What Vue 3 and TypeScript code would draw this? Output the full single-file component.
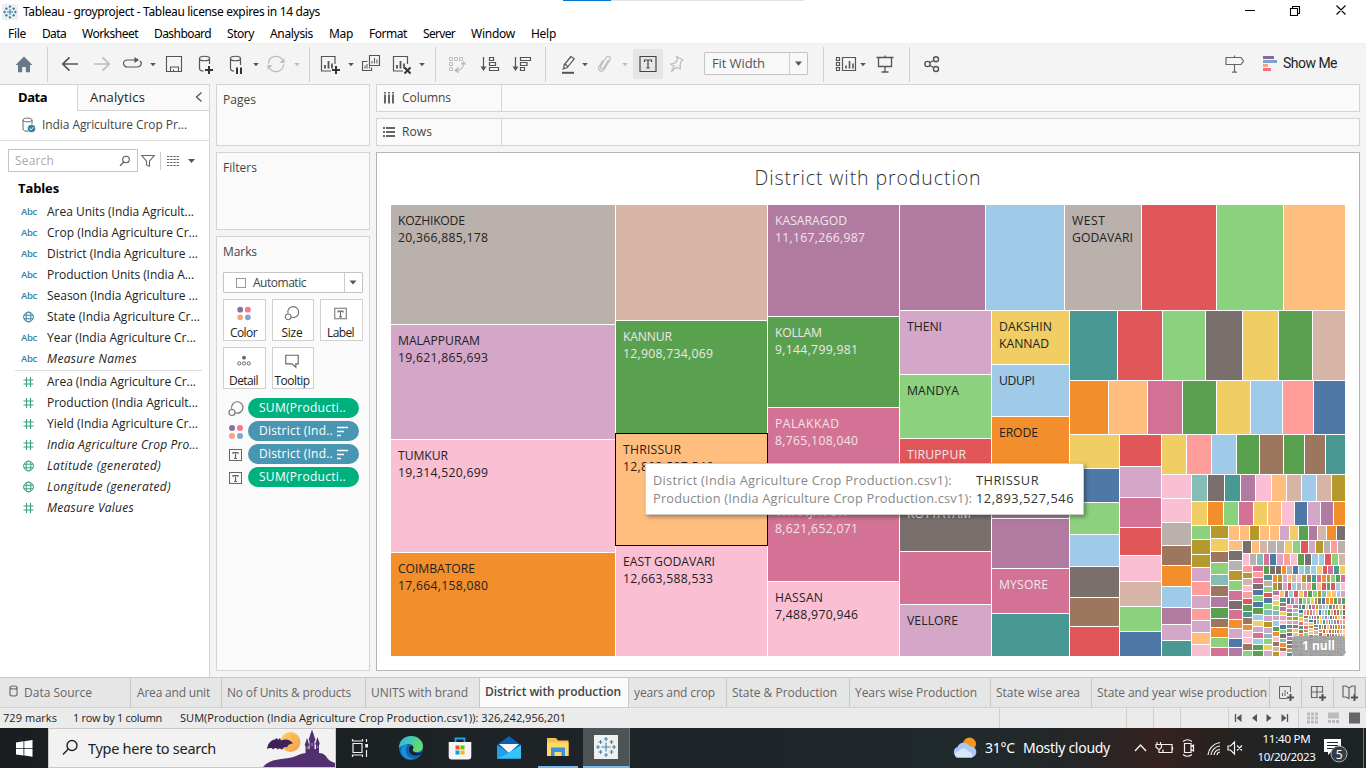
<script setup lang="ts">
type Strip = { dir: 'r' | 'c'; a: number; b: number; edges: number[]; cols: string }
type Rect = { x: number; y: number; w: number; h: number; fill: string }
type Label = { x: number; y: number; w: number; t: string; light?: boolean }

// Sets tracking so that a label fills its designed width.
const vFit = {
  mounted(el: HTMLElement, b: { value: number }) {
    const n = (el.textContent || '').trim().length
    const w = el.getBoundingClientRect().width
    if (n > 0) el.style.letterSpacing = ((b.value - w) / n).toFixed(3) + 'px'
  },
}

const palette: Record<string, string> = {
  b: '#4e79a7', l: '#a0cbe8', o: '#f28e2b', p: '#ffbe7d', g: '#59a14f', h: '#8cd17d', m: '#b6992d',
  y: '#f1ce63', t: '#499894', u: '#86bcb6', r: '#e15759', s: '#ff9d9a', k: '#79706e', a: '#bab0ac',
  d: '#d37295', f: '#fabfd2', v: '#b07aa1', w: '#d4a6c8', n: '#9d7660', c: '#d7b5a6',
}

const span = (from: number, to: number, n: number): number[] =>
  Array.from({ length: n + 1 }, (_, i) => Math.round(from + ((to - from) * i) / n))
const even = (dir: 'r' | 'c', a: number, b: number, from: number, to: number, cols: string): Strip =>
  ({ dir, a, b, edges: span(from, to, cols.length), cols })

const strips: Strip[] = [
  { dir: 'c', a: 391, b: 616, edges: [205, 325, 440, 553, 657], cols: 'awfo' },
  { dir: 'c', a: 616, b: 768, edges: [205, 321, 434, 546, 657], cols: 'cgpf' },
  { dir: 'c', a: 768, b: 900, edges: [205, 317, 408, 495, 582, 657], cols: 'vgddf' },
  { dir: 'r', a: 205, b: 311, edges: [900, 986, 1065, 1142, 1217, 1284, 1346], cols: 'vlarhp' },
  { dir: 'c', a: 900, b: 992, edges: [311, 375, 439, 497, 552, 605, 657], cols: 'whrkdw' },
  { dir: 'c', a: 992, b: 1070, edges: [311, 365, 417, 468, 519, 569, 614, 657], cols: 'ylovvdt' },
  { dir: 'r', a: 311, b: 381, edges: [1070, 1118, 1163, 1206, 1243, 1279, 1313, 1346], cols: 'trhkygc' },
  { dir: 'r', a: 381, b: 435, edges: [1070, 1109, 1148, 1183, 1217, 1251, 1283, 1314, 1346], cols: 'opdgylsb' },
  { dir: 'c', a: 1070, b: 1120, edges: [435, 469, 503, 535, 567, 598, 627, 657], cols: 'ybhlknr' },
  { dir: 'c', a: 1120, b: 1162, edges: [435, 467, 498, 528, 556, 582, 607, 632, 657], cols: 'rwdrfchb' },
  { dir: 'r', a: 435, b: 475, edges: [1162, 1187, 1212, 1237, 1260, 1284, 1305, 1326, 1346], cols: 'yslgngnt' },
  { dir: 'c', a: 1162, b: 1192, edges: [475, 499, 523, 546, 566, 587, 608, 625, 641, 657], cols: 'ffanolvwt' },
  { dir: 'r', a: 475, b: 502, edges: [1192, 1208, 1225, 1241, 1256, 1272, 1287, 1302, 1317, 1332, 1346], cols: 'uktvfpclcm' },
  { dir: 'r', a: 502, b: 526, edges: [1192, 1208, 1224, 1239, 1254, 1268, 1282, 1295, 1308, 1321, 1334, 1346], cols: 'yohdypfbwvo' },
  { dir: 'c', a: 1192, b: 1211, edges: [526, 540, 555, 568, 582, 596, 609, 621, 633, 645, 657], cols: 'hmmwswswpf' },
  { dir: 'c', a: 1211, b: 1229, edges: [526, 539, 552, 563, 575, 586, 597, 608, 619, 628, 638, 648, 657], cols: 'mynhunvgnohd' },
  { dir: 'r', a: 526, b: 541, edges: [1229, 1240, 1250, 1260, 1270, 1280, 1290, 1299, 1309, 1318, 1327, 1337, 1346], cols: 'ppmppwygvcok' },
  { dir: 'c', a: 1229, b: 1243, edges: [541, 551, 561, 571, 581, 591, 601, 610, 620, 629, 639, 648, 657], cols: 'pkamhdkdowbv' },
  { dir: 'r', a: 541, b: 554, edges: [1243, 1252, 1260, 1268, 1277, 1285, 1293, 1301, 1309, 1316, 1324, 1331, 1338, 1346], cols: 'kpcaayhrwmasa' },
  even('r', 554, 566, 1243, 1346, 'faudbwsfgkllrhc'),
  even('c', 1243, 1253, 566, 657, 'smcfsrgtnoffnh'),
  even('c', 1253, 1264, 566, 657, 'dsdkbhbglywdlgg'),
  even('r', 566, 575, 1264, 1346, 'gkkoablulyrdty'),
  even('c', 1264, 1273, 575, 657, 'tahrbhuwmwuhyw'),
  even('r', 575, 583, 1273, 1346, 'omwpcfmntdomhgd'),
  even('r', 583, 591, 1273, 1346, 'mnwrlacsgprgrlf'),
  even('c', 1273, 1280, 591, 657, 'vfyhuwlgofncm'),
  even('r', 591, 598, 1280, 1346, 'pnlrydghmuyplw'),
  even('c', 1280, 1287, 598, 657, 'tnvywfbhkuonf'),
  even('r', 598, 605, 1287, 1346, 'bvwghhymkboogvg'),
  even('c', 1287, 1293, 605, 657, 'sdgowtmbdknot'),
  even('c', 1293, 1299, 605, 657, 'vwhmanpywubsh'),
  even('r', 605, 610, 1299, 1346, 'gbpkdmualgvoyr'),
  even('c', 1299, 1304, 610, 657, 'bhydtnolsmwk'),
  even('r', 610, 616, 1304, 1346, 'smdwpblugcrnhk'),
  even('c', 1304, 1309, 616, 657, 'rcpdmhfgtvyw'),
  even('r', 616, 620, 1309, 1346, 'ubdgpwvlknoyhr'),
]

// The tail alternates a column on the left with a row on top, down to single pixels.
const keys = 'gdlwbypsvmktoranhfuc'
let seed = 7
const pick = (n: number): string => {
  let s = ''
  for (let i = 0; i < n; i++) {
    seed = (seed * 1103515245 + 12345) % 2147483648
    s += keys[Math.floor(seed / 65536) % keys.length]
  }
  return s
}
let tx = 1309
let ty = 620
for (const size of [5, 5, 4, 4, 4, 3, 3, 3, 3]) {
  strips.push(even('c', tx, tx + size, ty, 657, pick(Math.round((657 - ty) / 3.2))))
  tx += size
  strips.push(even('r', ty, ty + size, tx, 1346, pick(Math.max(2, Math.round((1346 - tx) / 2.8)))))
  ty += size
}

const rects: Rect[] = strips.flatMap((s) =>
  [...s.cols].map((k, i) => {
    const from = s.edges[i]
    const len = Math.max(1, s.edges[i + 1] - from - 1)
    const thick = s.b - s.a - 1
    return s.dir === 'r'
      ? { x: from, y: s.a, w: len, h: thick, fill: palette[k] }
      : { x: s.a, y: from, w: thick, h: len, fill: palette[k] }
  }),
)

const labels: Label[] = [
  { x: 398, y: 225, w: 67, t: 'KOZHIKODE' }, { x: 398, y: 242, w: 90, t: '20,366,885,178' },
  { x: 398, y: 345, w: 82, t: 'MALAPPURAM' }, { x: 398, y: 362, w: 90, t: '19,621,865,693' },
  { x: 398, y: 460, w: 50, t: 'TUMKUR' }, { x: 398, y: 477, w: 90, t: '19,314,520,699' },
  { x: 398, y: 573, w: 77, t: 'COIMBATORE' }, { x: 398, y: 590, w: 90, t: '17,664,158,080' },
  { x: 623, y: 341, w: 49, t: 'KANNUR', light: true }, { x: 623, y: 358, w: 90, t: '12,908,734,069', light: true },
  { x: 623, y: 454, w: 58, t: 'THRISSUR' }, { x: 623, y: 471, w: 90, t: '12,893,527,546' },
  { x: 623, y: 566, w: 92, t: 'EAST GODAVARI' }, { x: 623, y: 583, w: 90, t: '12,663,588,533' },
  { x: 775, y: 225, w: 72, t: 'KASARAGOD', light: true }, { x: 775, y: 242, w: 90, t: '11,167,266,987', light: true },
  { x: 775, y: 337, w: 47, t: 'KOLLAM', light: true }, { x: 775, y: 354, w: 83, t: '9,144,799,981', light: true },
  { x: 775, y: 428, w: 64, t: 'PALAKKAD', light: true }, { x: 775, y: 445, w: 83, t: '8,765,108,040', light: true },
  { x: 775, y: 516, w: 71, t: 'THANJAVUR', light: true }, { x: 775, y: 533, w: 83, t: '8,621,652,071', light: true },
  { x: 775, y: 602, w: 48, t: 'HASSAN' }, { x: 775, y: 619, w: 83, t: '7,488,970,946' },
  { x: 907, y: 331, w: 35, t: 'THENI' }, { x: 907, y: 395, w: 52, t: 'MANDYA' },
  { x: 907, y: 459, w: 59, t: 'TIRUPPUR', light: true }, { x: 907, y: 518, w: 64, t: 'KOTTAYAM', light: true },
  { x: 907, y: 625, w: 51, t: 'VELLORE' },
  { x: 999, y: 331, w: 53, t: 'DAKSHIN' }, { x: 999, y: 348, w: 50, t: 'KANNAD' },
  { x: 999, y: 385, w: 36, t: 'UDUPI' }, { x: 999, y: 437, w: 39, t: 'ERODE' },
  { x: 999, y: 589, w: 49, t: 'MYSORE', light: true },
  { x: 1072, y: 225, w: 33, t: 'WEST' }, { x: 1072, y: 242, w: 61, t: 'GODAVARI' },
]

const menus: [string, number, number][] = [
  ['File', 8, 18], ['Data', 42, 24], ['Worksheet', 82, 56], ['Dashboard', 154, 57], ['Story', 227, 27],
  ['Analysis', 270, 43], ['Map', 329, 24], ['Format', 369, 38], ['Server', 423, 32], ['Window', 471, 44], ['Help', 531, 25],
]

const G = '#555'
const L = '#bdbdbd'
const miniT = (c: string) =>
  `<g fill="none" stroke="${c}" stroke-width="1"><rect x="5.5" y="6.5" width="12" height="11"/><path d="M9 11V9.5H14V11M11.5 9.5V15M10 15.5H13" stroke-width="1.2"/></g>`
const bars = (c: string) => `<path d="M7 16.500V13M10.500 16.500V9M14 16.500V11.500" stroke="${c}" stroke-width="1.800"/>`
const icons: Record<string, string> = {
  home: `<path d="M3.500 13 12 4.500 20.500 13H18v7.200h-4.200V15h-3.600v5.200H6V13z" fill="#697889"/>`,
  back: `<path d="M20 12H4.800M11.500 5.300 4.800 12l6.700 6.700" fill="none" stroke="${G}" stroke-width="1.700"/>`,
  fwd: `<path d="M4 12H19.200M12.500 5.300 19.200 12l-6.700 6.700" fill="none" stroke="${L}" stroke-width="1.700"/>`,
  redo: `<path d="M16 8H7.500a4 3.500 0 0 0 0 7H17A4 3.500 0 0 0 20 9" fill="none" stroke="${G}" stroke-width="1.200"/><path d="M14.500 5 19 8l-4.500 3z" fill="${G}"/>`,
  save: `<path d="M4.500 4.500h15v15h-15zM8.500 19.500v-4.500h8v4.500M11.500 19.500v-2" fill="none" stroke="${G}" stroke-width="1.100"/>`,
  dbadd: `<path d="M5.500 6.500c0-3 10-3 10 0s-10 3-10 0v10c0 1.800 2 2.500 4 2.500M15.500 6.500v5.500" fill="none" stroke="${G}" stroke-width="1.200"/><path d="M15 14v8M11 18h8" stroke="#333" stroke-width="2"/>`,
  dbpause: `<path d="M6.500 6.500c0-3 10-3 10 0s-10 3-10 0v10c0 1.800 1.500 2.500 3.500 2.500M16.500 6.500v6.500" fill="none" stroke="${G}" stroke-width="1.200"/><path d="M13 15.500V22M17 15.500V22" stroke="#333" stroke-width="2"/>`,
  refresh: `<path d="M4.500 11.500a7.500 7 0 0 1 14-3.500M19.500 12.500a7.500 7 0 0 1-14 3.500" fill="none" stroke="${L}" stroke-width="1.300"/><path d="M20.500 6v5h-5zM3.500 18v-5h5z" fill="${L}"/>`,
  caret: `<path d="M9.200 11h5.600l-2.800 3.200z" fill="#555"/>`,
  caretL: `<path d="M9.200 11h5.600l-2.800 3.200z" fill="#bdbdbd"/>`,
  chartadd: `<path d="M17 12V4.500H3.500v14.500H13" fill="none" stroke="${G}" stroke-width="1.200"/>${bars(G)}<path d="M18 14v8M14 18h8" stroke="#333" stroke-width="2"/>`,
  dup: `<path d="M10.500 3.500h10v10h-10zM8.500 9.500h-5v9h9v-3" fill="none" stroke="${G}" stroke-width="1.100"/><path d="M13 11.500V9M15.500 11.500V6M18 11.500V7.500M6 16.500v-3M8 16.500V12M10.500 16.500v-2" stroke="${G}"/>`,
  clear: `<path d="M17.500 12V4.500H3.500v14.500H13" fill="none" stroke="${G}" stroke-width="1.200"/>${bars(G)}<path d="m14.500 15.500 6 6M20.500 15.500l-6 6" stroke="#333" stroke-width="2"/>`,
  swap: `<path d="M4.500 5.500h3v3h-3zM9.500 5.500h3v3h-3zM14.500 5.500h3v3h-3zM4.500 10.500h3v3h-3zM4.500 15.500h3v3h-3z" fill="none" stroke="${L}"/><path d="M11 18.500c4.500 0 7-2.500 7.500-6.500" fill="none" stroke="${L}" stroke-width="1.300"/><path d="m13.500 14.500-4.500 4 4.500 3zM15.500 12.500l3-3.500 3 3.500z" fill="${L}"/>`,
  asc: `<path d="M5.500 5v13M11.500 5.500h4v3h-4zM11.500 10.500h6v3h-6zM11.500 15.500h9v3h-9z" fill="none" stroke="${G}" stroke-width="1.200"/><path d="M2.500 14.500h6l-3 4.500z" fill="${G}"/>`,
  desc: `<path d="M5.500 5v13M10.500 5.500h10v3h-10zM10.500 10.500h6.500v3h-6.500zM10.500 15.500h4v3h-4z" fill="none" stroke="${G}" stroke-width="1.200"/><path d="M2.500 14.500h6l-3 4.500z" fill="${G}"/>`,
  pen: `<path d="M15 4.500 8 13v3.500l3-.7 7.200-9zM8 16.500l-1.500 1M9 12l2.500 2.300" fill="none" stroke="${G}" stroke-width="1.200"/><path d="M6 20.800h12" stroke="${G}" stroke-width="2"/>`,
  clip: `<path d="m15.500 8-5 8c-1.200 2-4 .5-3-1.500l5.500-9c1.700-2.500 5.500-.5 4 2.200l-6 9.800c-2.200 3.500-7 .7-5-2.800l4-6.500" fill="none" stroke="${L}" stroke-width="1.200"/>`,
  label: `<path d="M4 4.500h16v15H4zM8.500 10V8h7v2M12 8v8M10.300 16h3.400" fill="none" stroke="#444" stroke-width="1.200"/>`,
  pin: `<path d="m11.500 4.500 6.500 3.500-2 1.500-1 4 .5 3.500-4-1.700-5 4.200 2.500-5.500-3.500-2 4.500-1 2.500-3z" fill="none" stroke="${L}" stroke-width="1.200" stroke-linejoin="round"/>`,
  cards: `<path d="M2.500 5.500h3v3h-3zM2.500 10.500h3v3h-3zM2.500 15.500h3v3h-3zM8.500 5.500h13v13h-13z" fill="none" stroke="${G}" stroke-width="1.200"/><path d="M12 16.500v-3M15.500 16.500V9M19 16.500v-5" stroke="${G}" stroke-width="1.600"/>`,
  present: `<path d="M3.500 5.500h17M5.500 5.500v9h13v-9M12 15v5M8.500 20h7M12 3.500v2" fill="none" stroke="${G}" stroke-width="1.300"/>`,
  share: `<g fill="none" stroke="${G}" stroke-width="1.400"><circle cx="7.500" cy="12" r="2.600"/><circle cx="16" cy="7.200" r="2.500"/><circle cx="16" cy="17" r="2.500"/><path d="m10 10.500 3.500-2M10 13.500l3.500 2"/></g>`,
  sign: `<path d="M4 5.500h15l2.500 3.500-2.500 3.500H4zM12.500 3.500v2M12.500 12.500V20M10 20.200h5" fill="none" stroke="#666" stroke-width="1.200"/>`,
  me: `<path d="M4 4h11v3H4z" fill="#866b97"/><path d="M4 8h14v3H4z" fill="#7fa2ce"/><path d="M4 12h5v3H4z" fill="#f6a57c"/><path d="M4 16h8v3H4z" fill="#fb6f80"/>`,
  sep: `<path d="M12.500 -5V30" stroke="#d0d0d0"/>`,
  dots: `<circle cx="8" cy="8" r="3" fill="#8a7196"/><circle cx="16" cy="8" r="3" fill="#f97787"/><circle cx="8" cy="16" r="3" fill="#f4a57e"/><circle cx="16" cy="16" r="3" fill="#83a6cf"/>`,
  size: `<g fill="none" stroke="#777" stroke-width="1.200"><path d="M7.800 12A5.700 5.700 0 1 1 11.300 15.800"/><circle cx="8" cy="15.500" r="3"/></g>`,
  mini: miniT('#666'),
  detail: `<circle cx="12" cy="8" r="2" fill="#666"/><g fill="none" stroke="#666"><circle cx="7" cy="14" r="1.700"/><circle cx="12" cy="14" r="1.700"/><circle cx="17" cy="14" r="1.700"/></g>`,
  tip: `<path d="M5.500 5.500h13v9H16v3.500l-4-3.500H5.500z" fill="none" stroke="#666" stroke-width="1.200"/>`,
}

const left: [string, number][] = [
  ['home', 24], ['sep', 47], ['back', 70], ['fwd', 102], ['redo', 132], ['caret', 153], ['save', 174], ['dbadd', 206],
  ['dbpause', 236], ['caret', 256], ['refresh', 276], ['caretL', 297], ['sep', 309], ['chartadd', 330], ['caret', 351],
  ['dup', 371], ['clear', 402], ['caret', 422], ['sep', 435], ['swap', 457], ['asc', 490], ['desc', 522], ['sep', 545],
  ['pen', 568], ['caret', 585], ['clip', 605], ['caretL', 625], ['label', 648], ['pin', 677],
]
const right: [string, number][] = [
  ['sep', 823], ['cards', 846], ['caret', 863], ['present', 885], ['sep', 909], ['share', 932], ['sign', 1234], ['me', 1271],
]
const place = (list: [string, number][], start: number) =>
  list.map(([name, c], i) => ({ name, gap: c - 12 - (i ? list[i - 1][1] + 12 : start) }))
const tools = place(left, 0)
const tools2 = place(right, 808)

const dims: [string, string, number][] = [
  ['Abc', 'Area Units (India Agricult...', 147], ['Abc', 'Crop (India Agriculture Cr...', 151],
  ['Abc', 'District (India Agriculture ...', 151], ['Abc', 'Production Units (India A...', 147],
  ['Abc', 'Season (India Agriculture ...', 151], ['globe', 'State (India Agriculture Cr...', 153],
  ['Abc', 'Year (India Agriculture Cr...', 149], ['Abc', 'Measure Names', 90],
]
const meas: [string, string, number, boolean][] = [
  ['#', 'Area (India Agriculture Cr...', 149, false], ['#', 'Production (India Agricult...', 151, false],
  ['#', 'Yield (India Agriculture Cr...', 151, false], ['#', 'India Agriculture Crop Pro...', 152, true],
  ['globe', 'Latitude (generated)', 114, true], ['globe', 'Longitude (generated)', 124, true], ['#', 'Measure Values', 87, true],
]
const cells: [string, string, number][] = [
  ['dots', 'Color', 27], ['size', 'Size', 21], ['mini', 'Label', 27], ['detail', 'Detail', 29], ['tip', 'Tooltip', 35],
]
const pills: [string, string, string, number][] = [
  ['size', 'SUM(Producti..', 'green', 87], ['dots', 'District (Ind..', 'blue', 74],
  ['mini', 'District (Ind..', 'blue', 74], ['mini', 'SUM(Producti..', 'green', 87],
]
// label, tab width, text inset, text width
const tabs: [string, number, number, number][] = [
  ['Area and unit', 91, 6, 73], ['No of Units & products', 144, 5, 124], ['UNITS with brand', 114, 5, 97],
  ['District with production', 149, 5, 136], ['years and crop', 98, 5, 81], ['State & Production', 123, 5, 105],
  ['Years wise Production', 141, 5, 122], ['State wise area', 101, 5, 84], ['State and year wise production', 178, 5, 170],
]
const burst = 'M12 7.500v9M7.500 12h9M12 2v4M10 4h4M12 18v4M10 20h4M2 12h4M4 10v4M18 12h4M20 10v4M6.500 5v4M4.500 7h4M17.500 5v4M15.500 7h4M6.500 15v4M4.500 17h4M17.500 15v4M15.500 17h4'
</script>

<template>
  <div class="screen">
    <header class="title">
      <svg class="logo" width="16" height="16" viewBox="0 0 24 24"><rect width="24" height="24" fill="#eee" /><path :d="burst" stroke="#2f7ca8" stroke-width="1.5" fill="none" /></svg>
      <span v-fit="297">Tableau - groyproject - Tableau license expires in 14 days</span>
      <svg class="win" width="106" height="14" viewBox="0 0 106 14"><path d="M0 6.500h10M45.500 4.500h7v7h-7zM47.500 4.500v-2h7v7h-2M91.500 1.500l9 9M100.500 1.500l-9 9" fill="none" stroke="#000" stroke-width="1.1" /></svg>
      <i class="load"><b></b></i>
    </header>
    <nav class="menu">
      <span v-for="(m, i) in menus" :key="m[0]" :style="{ width: (i < 10 ? menus[i + 1][1] - m[1] : 40) + 'px' }"><span v-fit="m[2]">{{ m[0] }}</span></span>
    </nav>
    <div class="toolbar">
      <svg v-for="(t, i) in tools" :key="i" :class="{ on: t.name === 'label' }" width="24" height="24" viewBox="0 0 24 24" :style="{ marginLeft: t.gap + 'px' }" v-html="icons[t.name]"></svg>
      <div class="fit"><span v-fit="53">Fit Width</span><svg width="18" height="21" viewBox="0 0 18 21"><path d="M.5 0v21" stroke="#ccc" /><path d="M6 8.500h7l-3.500 4.200z" fill="#555" /></svg></div>
      <svg v-for="(t, i) in tools2" :key="'b' + i" width="24" height="24" viewBox="0 0 24 24" :style="{ marginLeft: t.gap + 'px' }" v-html="icons[t.name]"></svg>
      <span class="showme"><span v-fit="54">Show Me</span></span>
    </div>

    <main class="body">
      <aside class="side">
        <div class="stabs"><b class="st1"><span v-fit="29">Data</span></b><span class="st2"><span v-fit="55">Analytics</span><svg width="8" height="12" viewBox="0 0 8 12"><path d="M6.500 1.500 1.500 6l5 4.500" fill="none" stroke="#555" stroke-width="1.3" /></svg></span></div>
        <div class="source">
          <svg width="14" height="16" viewBox="0 0 14 16"><path d="M1 3c0-2.500 9-2.500 9 0S1 5.500 1 3v9c0 1.500 2 2.300 5 2.300M10 3v4" fill="none" stroke="#666" /><circle cx="9.500" cy="11.500" r="3.800" fill="#37839f" /><path d="m7.600 11.500 1.400 1.400 2.400-2.700" fill="none" stroke="#fff" /></svg>
          <span v-fit="145">India Agriculture Crop Pr...</span>
        </div>
        <div class="find">
          <div class="box"><span v-fit="39">Search</span><svg width="12" height="12" viewBox="0 0 12 12"><circle cx="7" cy="4.500" r="3.300" fill="none" stroke="#555" stroke-width="1.1" /><path d="M4.700 7 1 10.800" stroke="#555" stroke-width="1.2" /></svg></div>
          <svg class="funnel" width="14" height="14" viewBox="0 0 14 14"><path d="M.8 1.500h12.400L8.500 7.200v5L5.500 11V7.200z" fill="none" stroke="#666" stroke-width="1.1" /></svg>
          <svg class="grid" width="38" height="18" viewBox="0 0 38 18"><path d="M.5 0v18" stroke="#ccc" /><path d="M7 4.500h12M7 7.500h12M7 10.500h12M7 13.500h12" stroke="#666" stroke-width="1.200" stroke-dasharray="2.400 .8" /><path d="M28 7h7l-3.500 4z" fill="#555" /></svg>
        </div>
        <h3><span v-fit="41">Tables</span></h3>
        <ul class="fields">
          <li v-for="d in dims" :key="d[1]" :class="{ it: d[1].startsWith('Measure') }">
            <i v-if="d[0] === 'Abc'" class="abc"><span v-fit="16">Abc</span></i>
            <i v-else class="globe"><svg width="11" height="12" viewBox="0 0 11 12"><g fill="none" stroke="#37839f"><circle cx="5.500" cy="6" r="4.900" /><ellipse cx="5.500" cy="6" rx="2.400" ry="4.900" /><path d="M1 4.200h9M1 7.800h9" /></g></svg></i>
            <span v-fit="d[2]">{{ d[1] }}</span>
          </li>
        </ul>
        <ul class="fields lower">
          <li v-for="d in meas" :key="d[1]" :class="{ it: d[3] }">
            <i v-if="d[0] === '#'" class="globe"><svg width="11" height="12" viewBox="0 0 11 12"><path d="M3.500 1v10M7.500 1v10M.5 4h10M.5 8h10" stroke="#35a378" stroke-width="1.1" /></svg></i>
            <i v-else class="globe"><svg width="11" height="12" viewBox="0 0 11 12"><g fill="none" stroke="#35a378"><circle cx="5.500" cy="6" r="4.900" /><ellipse cx="5.500" cy="6" rx="2.400" ry="4.900" /><path d="M1 4.200h9M1 7.800h9" /></g></svg></i>
            <span v-fit="d[2]">{{ d[1] }}</span>
          </li>
        </ul>
      </aside>

      <section class="shelves">
        <div class="card pages"><span v-fit="33">Pages</span></div>
        <div class="card filters"><span v-fit="34">Filters</span></div>
        <div class="card marks">
          <span v-fit="34">Marks</span>
          <div class="auto"><i></i><span v-fit="53">Automatic</span><svg width="18" height="19" viewBox="0 0 18 19"><path d="M.5 0v19" stroke="#ccc" /><path d="M5.500 7.500h7L9 11.500z" fill="#555" /></svg></div>
          <div class="cells">
            <div v-for="c in cells" :key="c[1]"><svg width="24" height="24" viewBox="0 0 24 24" v-html="icons[c[0]]"></svg><span v-fit="c[2]">{{ c[1] }}</span></div>
          </div>
          <div v-for="(p, i) in pills" :key="i" class="prow">
            <svg width="24" height="22" viewBox="0 1 24 22" v-html="icons[p[0]]"></svg>
            <div class="pill" :class="p[2]"><span v-fit="p[3]">{{ p[1] }}</span><svg v-if="p[2] === 'blue'" width="11" height="11" viewBox="0 0 11 11"><path d="M0 1.500h11M0 5.500h7M0 9.500h4" stroke="#fff" stroke-width="1.600" /></svg></div>
          </div>
        </div>
      </section>

      <section class="work">
        <div class="shelf"><div><svg width="14" height="14" viewBox="0 0 14 14"><path d="M3 3.500v9M7 3.500v9M11 3.500v9M3 1v1.500M7 1v1.500M11 1v1.500" stroke="#666" stroke-width="2" /></svg><span v-fit="49">Columns</span></div></div>
        <div class="shelf"><div><svg width="14" height="14" viewBox="0 0 14 14"><path d="M1 3h2M4 3H13M1 7h2M4 7H13M1 11h2M4 11H13" stroke="#666" stroke-width="2" /></svg><span v-fit="30">Rows</span></div></div>
        <div class="view">
          <h2><span v-fit="227">District with production</span></h2>
          <svg class="map" width="955" height="452" viewBox="391 205 955 452">
            <rect v-for="(r, i) in rects" :key="i" :x="r.x" :y="r.y" :width="r.w" :height="r.h" :fill="r.fill" shape-rendering="crispEdges" />
            <rect x="615.5" y="433.5" width="152" height="112" fill="none" stroke="#000" />
            <text v-for="l in labels" :key="l.t" :x="l.x" :y="l.y" :textLength="l.w" :class="{ light: l.light }">{{ l.t }}</text>
          </svg>
          <div class="null"><span v-fit="33">1 null</span></div>
          <div class="tooltip">
            <p><em v-fit="299">District (India Agriculture Crop Production.csv1):</em></p><p><strong v-fit="63">THRISSUR</strong></p>
            <p><em v-fit="319">Production (India Agriculture Crop Production.csv1):</em></p><p><strong v-fit="98">12,893,527,546</strong></p>
          </div>
        </div>
      </section>
    </main>

    <div class="tabs">
      <div class="ds"><svg width="9" height="12" viewBox="0 0 9 12"><path d="M1 2.500c0-2 7-2 7 0s-7 2-7 0v7c0 2 7 2 7 0v-7" fill="none" stroke="#666" stroke-width="1.100" /></svg><span v-fit="68">Data Source</span></div>
      <div v-for="(t, i) in tabs" :key="t[0]" :class="{ active: i === 3 }" :style="{ width: t[1] + 'px', paddingLeft: t[2] + 'px' }"><span v-fit="t[3]">{{ t[0] }}</span></div>
      <div class="ic"><svg width="20" height="20" viewBox="0 0 20 20"><path d="M14.500 9V3.500h-11v12H11" fill="none" stroke="#666" /><path d="M6.500 13v-3M9 13V7M11.500 11V9" stroke="#666" /><path d="M14.500 11v7M11 14.500h7" stroke="#555" stroke-width="2" /></svg></div>
      <div class="ic"><svg width="20" height="20" viewBox="0 0 20 20"><path d="M14.500 10V3.500h-11v11H10M9 3.500v11M3.500 9h11" fill="none" stroke="#666" stroke-width="1.200" /><path d="M14.500 11v7M11 14.500h7" stroke="#555" stroke-width="2" /></svg></div>
      <div class="ic"><svg width="20" height="20" viewBox="0 0 20 20"><path d="M9 5 6 3H3v11h3l3 1.500zM9 5l3-2h3v8" fill="none" stroke="#666" stroke-width="1.200" /><path d="M14.500 11v7M11 14.500h7" stroke="#555" stroke-width="2" /></svg></div>
    </div>
    <div class="status">
      <span class="s1"><span v-fit="54">729 marks</span></span><span class="s2"><span v-fit="89">1 row by 1 column</span></span><span class="s3"><span v-fit="386">SUM(Production (India Agriculture Crop Production.csv1)): 326,242,956,201</span></span>
      <i class="c127"></i><i class="c27"></i><i class="c27"></i><i class="c48"></i>
      <i class="c70"><svg width="70" height="20" viewBox="0 0 70 20"><path d="M7.500 6v8M59.500 6v8" stroke="#555" stroke-width="1.300" /><path d="M13.500 6v8l-5-4zM29 6v8l-5-4zM38.500 6v8l5-4zM53.500 6v8l5-4z" fill="#555" /></svg></i>
      <i class="last"><svg width="66" height="20" viewBox="0 0 66 20"><path d="M8 6h11M8 10h11M8 14h11" stroke="#bbb" stroke-width="3" stroke-dasharray="3 1" /><path d="M29 4.500h11v6H29z" fill="#bbb" /><path d="M29 13.500h11" stroke="#bbb" stroke-width="3" stroke-dasharray="3 1" /><path d="M50 4.500h11v11H50z" fill="#666" /></svg></i>
    </div>

    <footer class="taskbar">
      <div class="start"><svg width="17" height="17" viewBox="0 0 17 17"><path d="M0 2.400 7.500 1.300V8H0zM8.300 1.200 16.500 0v8H8.300zM0 8.800h7.500v6.800L0 14.500zM8.300 8.800h8.200v8l-8.200-1.200z" fill="#fff" /></svg></div>
      <div class="search">
        <svg width="18" height="18" viewBox="0 0 18 18"><circle cx="11" cy="6.500" r="5" fill="none" stroke="#222" stroke-width="1.400" /><path d="M7.300 10 2 15.500" stroke="#222" stroke-width="1.400" /></svg>
        <span v-fit="128">Type here to search</span>
        <svg class="castle" width="72" height="38" viewBox="0 0 72 38">
          <defs><linearGradient id="moon" x1="0" y1="0" x2="1" y2="1"><stop offset="0" stop-color="#ffd56a" /><stop offset="1" stop-color="#ef9a4d" /></linearGradient></defs>
          <circle cx="27.500" cy="13" r="10" fill="url(#moon)" /><circle cx="30" cy="8" r="2" fill="#f5b44f" /><circle cx="33" cy="15" r="1.500" fill="#f5b44f" />
          <path d="M4 20c1-6 4-9 8-9.500L13.500 9l1.700 1.700L17 9l1 2.500c5-2 9-1 12 3-3 0-5 1-6 4-2-1-4 0-5 2.500-1.500-2-3-2-4.500-.5-1-2-3-2-4.500 0-1-2-3-2-6-.5z" fill="#3f2057" />
          <path d="M42.500 29V17l-.8-1 2.300-7 2.300 7-.8 1v3h1V12l-1-1 3.500-10.500L52.500 11l-1 1v8h1.500v-4l-.8-1 2.300-7 2.300 7-.8 1v14z" fill="#52306f" />
          <path d="M0 38c5-6 11-7 18-8 6-1 10-1 15-3 4-2 7-3 11-3h12c5 0 7 3 9 6 2 2.500 5 3 7 4v4z" fill="#52306f" /><path d="M48.500 14h1v3h-1zM43.700 18h.8v2h-.8zM54 17h.8v2H54z" fill="#e8a24e" />
        </svg>
      </div>
      <div class="app tv"><svg width="20" height="20" viewBox="0 0 20 20"><path d="M3 5.500h9v9H3zM2.500 1v2.500M12.500 1v2.500M2.500 3h10M2.500 19v-2.500M12.500 19v-2.500M2.500 17h10M16.500 1v3M16.500 12v7" fill="none" stroke="#eee" stroke-width="1.200" /><path d="M15.200 6h2.800v3.500h-2.800z" fill="#eee" /></svg></div>
      <div class="app edge"><svg width="26" height="26" viewBox="0 0 26 26">
        <defs><linearGradient id="e1" x1="0" y1="0" x2="1" y2=".4"><stop offset="0" stop-color="#2fb3ee" /><stop offset="1" stop-color="#63dc6b" /></linearGradient></defs>
        <circle cx="13" cy="13" r="12" fill="#0f63b5" /><path d="M1 13C1 5 7 1 13 1c7 0 12 5 12 10 0 4-3 6-6 6-4 0-5-1.500-4-3 1-2 0-5-4-5-5 0-9 3-10 4z" fill="url(#e1)" /><path d="M11 14c0-3 2-3.500 3.500-3 1 .7 1.200 2 .5 3-1 2 1 4 5 4 2 0 3.500-.5 4.500-1-1 2-3 3.500-7 3.500-4.500 0-6.500-3-6.500-6.500z" fill="#1b2225" /><path d="M8 14c-1 5 3 10 9 9.500-6 3-13-1-14-7C2.500 12 6 9.500 10 9.800 9 10.500 8 12 8 14z" fill="#1b8fd8" /></svg></div>
      <div class="app store"><svg width="24" height="24" viewBox="0 0 24 24"><path d="M7.500 7V2.500h9V7" fill="none" stroke="#23a5ea" stroke-width="1.800" /><path d="M.7 6h22.600v14.500a3 3 0 0 1-3 3H3.700a3 3 0 0 1-3-3z" fill="#f5f5f5" /><path d="M7.500 9.500h4v4h-4z" fill="#f25022" /><path d="M12.500 9.500h4v4h-4z" fill="#7fba00" /><path d="M7.500 14.500h4v4h-4z" fill="#00a4ef" /><path d="M12.500 14.500h4v4h-4z" fill="#ffb900" /></svg></div>
      <div class="app mail"><svg width="26" height="24" viewBox="0 0 26 24"><path d="M1 9 13 0l12 9v13.500H1z" fill="#0a5fb4" /><path d="M3 8h20L13 17z" fill="#f5f8fb" /><path d="M1 9l12 8L25 9v13.500H1z" fill="#1fa0e8" /><path d="M1 22.500 13 17l12-8v13.500z" fill="#38c3f5" /></svg></div>
      <div class="app files"><svg width="24" height="22" viewBox="0 0 24 22"><path d="M1 2h9l2 2.500h10.500V20H1z" fill="#f6c445" /><path d="M1 6.500h21.500V20H1z" fill="#ffd96b" /><path d="M5 20v-8.500h14V20h-3.500v-4h-7v4z" fill="#3c93dd" /></svg></div>
      <div class="app tab"><svg width="24" height="24" viewBox="0 0 24 24"><rect width="24" height="24" fill="#f0f0f0" /><path :d="burst" stroke="#4385b0" stroke-width="1.100" fill="none" /></svg></div>
      <div class="weather">
        <svg width="26" height="24" viewBox="0 0 26 24"><circle cx="17.500" cy="8" r="6.500" fill="#f5941f" /><path d="M6 21.500a5.500 5.500 0 0 1-.5-10.500 6.500 6.500 0 0 1 12-.5 5.500 5.500 0 0 1 2.500 11z" fill="#a9c8f5" /><path d="M4 21.500a4 4 0 0 1 3-6.500 5 5 0 0 1 9 .5 4 4 0 0 1 4 6z" fill="#d9e7fd" /></svg>
        <span class="deg"><span v-fit="30">31°C</span></span><span v-fit="87">Mostly cloudy</span>
      </div>
      <svg class="tray" width="114" height="24" viewBox="0 0 114 24"><g fill="none" stroke="#f2f2f2" stroke-width="1.200"><path d="m2 15 5.500-6 5.500 6" stroke-width="1.400" /><path d="M28 8.500h11v8H30v-3M39.500 11v3M24 6v2.500M27.500 6v2.500M23 8.500h5.500v2.500l-1.500 2h-2L23 11zM26 13v3.500h4" /><path d="M51.500 7.500h6.500v9h-6.500zM58 10.500l2.500-1.500v6L58 13.500M50 5.500q4.500-3.500 9 0M50 18.500q4.500 3.500 9 0" /><path d="M75 19A14 14 0 0 1 87 6.500M78 19A10 10 0 0 1 87 10M81 19a6.500 6.500 0 0 1 6-5.500M84 19a3.500 3.500 0 0 1 3-3" /><path d="M95 10h2.500l4-4v12l-4-4H95zM104 9.500l5 5M109 9.500l-5 5" /></g></svg>
      <div class="clock"><span><span v-fit="48">11:40 PM</span></span><span><span v-fit="58">10/20/2023</span></span></div>
      <svg class="notif" width="28" height="28" viewBox="0 0 28 28"><path d="M2 4h17v13H9l-3 3v-3H2z" fill="#fff" /><path d="M5 7.500h11M5 10.500h11M5 13.500h8" stroke="#23282a" stroke-width="1.200" /><circle cx="17" cy="19" r="8" fill="#3a3d3f" stroke="#aaa" /><text x="13.700" y="23.500" font-size="12" fill="#fff">5</text></svg>
      <i class="peek"></i>
    </footer>
  </div>
</template>

<style>
body { margin: 0; overflow: hidden; background: #f4f4f4; }
</style>

<style scoped>
* { box-sizing: border-box; }
.screen { width: 1366px; height: 768px; display: flex; flex-direction: column; background: #f4f4f4; font-family: "Open Sans", "Noto Sans", sans-serif; font-size: 12px; color: #222; overflow: hidden; white-space: nowrap; line-height: 16px; }
svg { display: block; flex: none; }
span[style], em, strong { display: inline-block; }
.title { position: relative; height: 24px; flex: none; display: flex; align-items: center; background: #fff; color: #000; font-family: "Noto Sans", sans-serif; }
.logo { margin: 0 5px 0 2px; }
.win { position: absolute; left: 1245px; top: 4px; }
.load { position: absolute; left: 563px; top: 0; width: 241px; height: 1px; background: #e3e3e3; }
.load b { display: block; width: 48px; height: 1px; background: #0078d7; }
.menu { height: 19px; flex: none; display: flex; align-items: center; background: #fff; padding-left: 8px; color: #000; font-family: "Noto Sans", sans-serif; }
.toolbar { height: 41px; flex: none; display: flex; align-items: flex-start; padding-top: 8px; border-top: 1px solid #efefef; }
.toolbar svg { overflow: visible; }
.toolbar svg.on { background: #e6e6e6; box-shadow: 0 0 0 3px #e6e6e6; }
.fit { width: 104px; height: 23px; margin-left: 15px; border: 1px solid #c4c4c4; border-radius: 1px; background: #f8f8f8; display: flex; align-items: center; justify-content: space-between; padding-left: 7px; font-size: 13px; color: #555; }
.fit > span { margin-top: -2px; }
.showme { padding-top: 3px; font-family: Roboto, sans-serif; font-size: 14px; color: #222; }
.body { flex: none; height: 593px; display: flex; }
.side { width: 210px; background: #fff; border-right: 1px solid #d4d4d4; }
.stabs { display: flex; height: 27px; border-top: 1px solid #d4d4d4; }
.st1 { width: 77px; padding: 4px 0 0 18px; color: #000; font-size: 13px; }
.st2 { flex: 1; display: flex; justify-content: space-between; align-items: center; padding: 0 6px 2px 12px; border-left: 1px solid #d4d4d4; border-bottom: 1px solid #d4d4d4; background: #fafafa; font-size: 13px; }
.source { height: 30px; display: flex; align-items: center; gap: 6px; padding: 0 0 1px 22px; border-bottom: 1px solid #dcdcdc; color: #444; }
.find { display: flex; margin-top: 8px; height: 23px; padding-left: 8px; align-items: center; }
.box { width: 130px; height: 23px; border: 1px solid #c4c4c4; display: flex; align-items: center; justify-content: space-between; padding: 0 6px; color: #aaa; }
.funnel { margin-left: 3px; }
.grid { margin-left: 5px; }
h3 { margin: 8px 0 5px; padding-left: 18px; font-size: 13px; line-height: 16px; color: #000; }
.fields { list-style: none; margin: 0; padding: 0; }
.fields li { height: 21px; display: flex; align-items: center; color: #222; }
.fields i { font-style: normal; flex: none; width: 26px; margin-left: 21px; padding-top: 1px; }
.fields .globe { width: 24px; margin-left: 23px; }
.abc { color: #37839f; font-weight: 600; font-size: 9.5px; line-height: 14px; }
.it > span { font-style: italic; }
.lower { margin: 0 7px 0 0; }
.lower::before { content: ''; display: block; height: 1px; background: #dcdcdc; margin: 1px 0 0 15px; }
.shelves { width: 154px; margin-left: 6px; display: flex; flex-direction: column; gap: 6px; }
.card { background: #fafafa; border: 1px solid #d4d4d4; padding: 7px 6px; color: #444; }
.pages { height: 62px; }
.filters { height: 78px; }
.marks { height: 435px; }
.auto { width: 140px; height: 21px; margin-top: 12px; border: 1px solid #c4c4c4; border-radius: 1px; background: #fff; display: flex; align-items: center; }
.auto i { width: 10px; height: 10px; border: 1px solid #999; margin: 0 7px 0 12px; }
.auto svg { margin-left: auto; }
.cells { display: grid; grid-template-columns: 43px 42px 43px; gap: 6px; margin: 6px 0 9px; }
.cells > div { height: 42px; border: 1px solid #d0d0d0; background: #fff; display: flex; flex-direction: column; align-items: center; color: #222; padding-right: 2px; }
.cells svg { margin-top: 2px; height: 23px; }
.prow { display: flex; height: 23px; margin-left: 1px; }
.pill { width: 111px; height: 20px; border-radius: 10px; color: #fff; display: flex; align-items: center; padding-left: 11px; gap: 4px; }
.pill svg { margin-top: 1px; }
.green { background: #00b180; }
.blue { background: #4996b2; }
.work { width: 984px; margin-left: 6px; display: flex; flex-direction: column; gap: 6px; }
.shelf { height: 28px; background: #fafafa; border: 1px solid #d4d4d4; display: flex; color: #444; }
.shelf div { width: 125px; border-right: 1px solid #d4d4d4; display: flex; align-items: center; gap: 6px; padding-left: 5px; }
.view { position: relative; height: 519px; background: #fff; border: 1px solid #b4b4b4; }
h2 { margin: 0; height: 52px; padding-top: 12px; text-align: center; font-weight: 300; font-size: 19.5px; line-height: 26px; color: #333; }
.map { margin-left: 14px; }
.map text { font-size: 12.2px; fill: #222; }
.map text.light { fill: #efe6e9; }
.null { position: absolute; left: 915px; top: 483px; width: 53px; height: 20px; border-radius: 3px; background: rgba(160, 160, 160, .9); color: #fff; font-weight: 700; display: flex; align-items: center; justify-content: center; }
.tooltip { position: absolute; left: 268px; top: 310px; width: 439px; height: 52px; border: 1px solid #ccc; background: #fff; box-shadow: 2px 2px 4px rgba(0, 0, 0, .35); display: grid; grid-template-columns: 323px 104px; grid-auto-rows: 18px; padding: 7px 7px; font-size: 12.8px; line-height: 18px; }
.tooltip p { margin: 0; }
.tooltip em { font-style: normal; color: #888; }
.tooltip strong { font-weight: 400; color: #333; }
.tabs { height: 31px; flex: none; display: flex; border-top: 1px solid #c8c8c8; border-bottom: 1px solid #d0d0d0; background: #e6e6e6; color: #666; overflow: hidden; }
.tabs > div { flex: none; border-right: 1px solid #c8c8c8; padding-top: 7px; }
.tabs .ds { width: 131px; display: flex; gap: 6px; padding-left: 9px; }
.tabs .active { background: #fafafa; color: #444; font-weight: 600; padding-top: 6px; }
.tabs .ic { width: 32px; padding: 5px 0 0 6px; }
.status { height: 20px; flex: none; display: flex; background: #ebebeb; font-size: 11px; line-height: 20px; color: #222; }
.s1 { width: 73px; padding-left: 3px; }
.s2 { width: 107px; }
.s3 { width: 819px; }
.status i { border-left: 1px solid #d0d0d0; height: 20px; }
.c127 { width: 127px; }
.c27 { width: 27px; }
.c48 { width: 48px; }
.c70 { width: 70px; }
.c70 svg { margin-left: -1px; }
.last { width: 68px; }
.taskbar { height: 40px; flex: none; display: flex; background: linear-gradient(90deg, #1a1e20 0, #1d2326 40%, #20292c 72%, #252628 79%, #35211f 85%, #28221f 89%, #1e2426 94%, #1c2325); color: #fff; font-family: "Noto Sans", sans-serif; }
.start { width: 48px; padding: 12px 0 0 16px; }
.search { position: relative; width: 288px; background: #f2f2f2; border: 1px solid #c9c9c9; color: #222; display: flex; align-items: center; font-size: 14.5px; gap: 9px; padding-left: 12px; }
.castle { position: absolute; right: 0; bottom: 0; }
.app { width: 49px; height: 40px; display: flex; align-items: center; justify-content: center; }
.tv { width: 48px; }
.edge { width: 53px; padding-left: 1px; }
.store { width: 45px; }
.mail { width: 54px; }
.files { width: 40px; margin: 0 5px 0 2px; border-bottom: 2px solid #76b9ed; }
.tab { width: 47px; background: #4d5456; border-bottom: 2px solid #76b9ed; border-right: 1px solid #6b7173; }
.weather { margin-left: 322px; display: flex; align-items: center; font-size: 14px; width: 181px; }
.deg { margin: 0 8px 0 7px; }
.tray { margin: 8px 0 0; width: 114px; }
.clock { width: 80px; display: flex; flex-direction: column; align-items: center; font-size: 11.5px; line-height: 18px; padding: 2px 1px 0 0; }
.notif { margin: 7px 0 0 -5px; }
.peek { margin-left: auto; width: 3px; border-left: 1px solid #6b7173; }
</style>
